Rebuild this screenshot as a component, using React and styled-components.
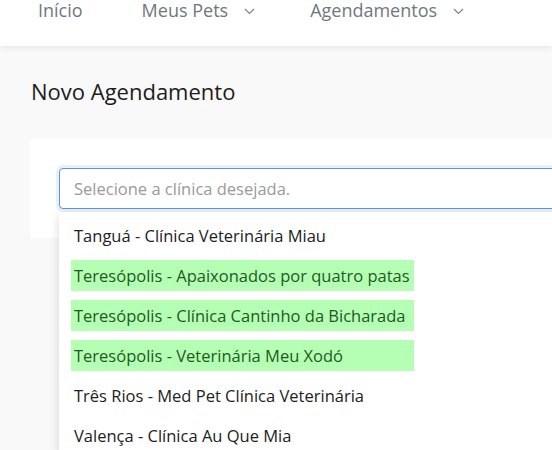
import React from 'react';
import styled, { createGlobalStyle } from 'styled-components';

const GlobalStyle = createGlobalStyle`
  html {
    overflow: hidden;
  }
  body {
    margin: 0;
    padding: 0;
    min-height: 450px;
    background: #f9f9f9;
    font-family: 'Open Sans', 'Noto Sans', sans-serif;
  }
`;

const Header = styled.header`
  display: flex;
  align-items: flex-start;
  height: 46px;
  padding-left: 38px;
  background: #fff;
  box-shadow: 0 2px 6px rgba(0, 0, 0, .07);
  position: relative;
  z-index: 2;
`;

const NavItem = styled.a`
  display: flex;
  align-items: center;
  gap: 16px;
  margin-right: ${p => p.$gap}px;
  font-size: 18px;
  line-height: 20px;
  color: #6f777e;
  text-decoration: none;
  svg { margin-top: 2px; }
`;

const Main = styled.main`
  padding: 30px 0 0 31px;
`;

const Title = styled.h1`
  margin: 0 0 33px;
  font-size: 22px;
  font-weight: 530;
  color: #1c1c1c;
`;

const Card = styled.section`
  position: relative;
  width: 560px;
  padding: 29px 0 29px 29px;
  margin-left: -1px;
  background: #fff;
`;

const Field = styled.div`
  position: relative;
`;

const Input = styled.input`
  box-sizing: border-box;
  width: 600px;
  height: 41px;
  padding: 0 14px;
  border: 1px solid #5b98c5;
  border-radius: 4px;
  box-shadow: 0 0 0 3px rgba(90, 160, 230, .15);
  font-family: inherit;
  font-size: 16.5px;
  color: #333;
  outline: none;
  &::placeholder { color: #9a9a9a; }
`;

const Dropdown = styled.ul`
  position: absolute;
  top: 44px;
  left: 0;
  width: 600px;
  margin: 0;
  padding: 3px 0 0;
  list-style: none;
  background: #fff;
  box-shadow: 0 3px 10px rgba(0, 0, 0, .14);
  z-index: 3;
`;

const Option = styled.li`
  display: flex;
  align-items: center;
  height: 40px;
  padding-left: 12px;
`;

const Label = styled.span`
  display: flex;
  align-items: center;
  box-sizing: border-box;
  width: 343px;
  height: 31px;
  padding-left: 3px;
  font-size: 16.5px;
  white-space: nowrap;
  color: ${p => (p.$match ? '#1d5a1d' : '#222')};
  background: ${p => (p.$match ? '#b5ffb5' : 'transparent')};
`;

const Chevron = () => (
  <svg width="11" height="7" viewBox="0 0 11 7" fill="none">
    <path d="M1 1l4.5 4.5L10 1" stroke="#7a8288" strokeWidth="1.1" />
  </svg>
);

const clinics = [
  { name: 'Tanguá - Clínica Veterinária Miau' },
  { name: 'Teresópolis - Apaixonados por quatro patas', match: true },
  { name: 'Teresópolis - Clínica Cantinho da Bicharada', match: true },
  { name: 'Teresópolis - Veterinária Meu Xodó', match: true },
  { name: 'Três Rios - Med Pet Clínica Veterinária' },
  { name: 'Valença - Clínica Au Que Mia' },
];

export default function App() {
  return (
    <>
      <GlobalStyle />
      <Header>
        <NavItem $gap={59}>Início</NavItem>
        <NavItem $gap={55}>Meus Pets <Chevron /></NavItem>
        <NavItem $gap={0}>Agendamentos <Chevron /></NavItem>
      </Header>
      <Main>
        <Title>Novo Agendamento</Title>
        <Card>
          <Field>
            <Input placeholder="Selecione a clínica desejada." />
            <Dropdown>
              {clinics.map(c => (
                <Option key={c.name}>
                  <Label $match={c.match}>{c.name}</Label>
                </Option>
              ))}
            </Dropdown>
          </Field>
        </Card>
      </Main>
    </>
  );
}
